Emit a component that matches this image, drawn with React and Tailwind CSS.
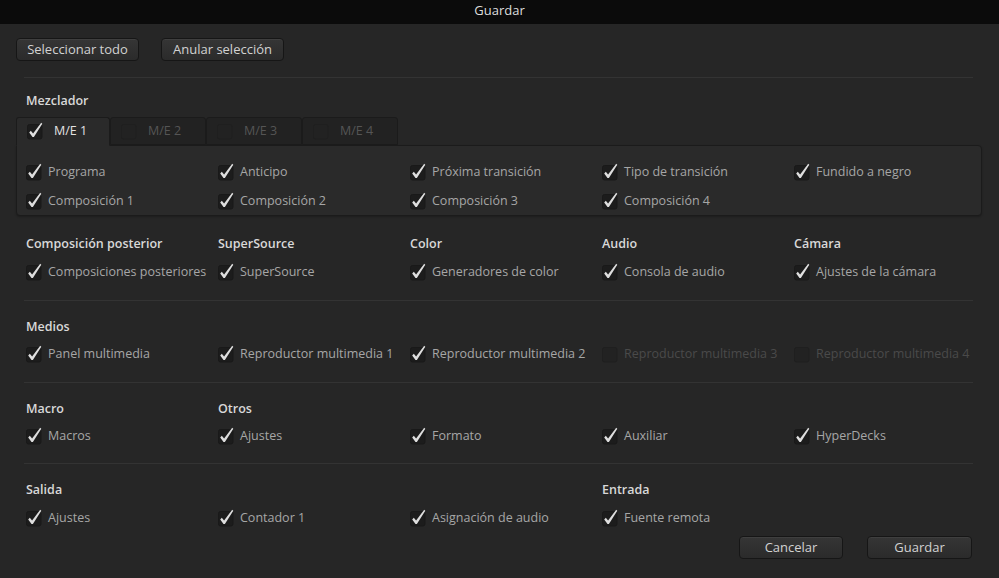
import React from 'react';

const font = { fontFamily: '"Open Sans", "Noto Sans", sans-serif' };

function Check({ on = true, dim = false }) {
  return (
    <svg width="18" height="21" viewBox="0 0 18 21" className="shrink-0">
      <rect x="0.5" y="3.5" width="14.5" height="14.5" rx="2" fill={dim ? '#222222' : '#1c1c1c'} stroke={dim ? '#1f1f1f' : '#191919'} />
      {on && (
        <path d="M2.2 11.4 L3.8 9.8 L6.1 12.4 L14.2 1.8 L15.3 2.7 L6.9 15.9 L5.5 15.9 Z" fill="#dedede" />
      )}
    </svg>
  );
}

function Item({ label, on = true, dim = false }) {
  return (
    <div className="flex items-center h-[20px] gap-[4px]">
      <Check on={on} dim={dim} />
      <span className={`text-[12.5px] whitespace-nowrap ${dim ? 'text-[#4a4a4a]' : 'text-[#a6a6a6]'}`}>{label}</span>
    </div>
  );
}

function Btn({ children, w }) {
  return (
    <button className={`${w} h-[23px] rounded-[4px] border border-[#161616] bg-gradient-to-b from-[#353535] to-[#2b2b2b] text-[13px] text-[#d2d2d2] shadow-[inset_0_1px_0_rgba(255,255,255,0.05)]`}>
      {children}
    </button>
  );
}

function Heads({ items }) {
  return (
    <div className="grid grid-cols-[repeat(5,192px)] h-[18px] pt-[1px] items-center">
      {items.map((h, i) => (
        <div key={i} className="text-[12.5px] font-semibold text-[#d8d8d8] whitespace-nowrap">{h}</div>
      ))}
    </div>
  );
}

function Row({ items, className = '' }) {
  return (
    <div className={`grid grid-cols-[repeat(5,192px)] ${className}`}>
      {items.map((it, i) => (it ? <Item key={i} {...it} /> : <div key={i} />))}
    </div>
  );
}

const Sep = ({ className = '' }) => <div className={`h-px bg-[#333333] ml-[24px] mr-[26px] ${className}`} />;

function Tab({ label, active = false, w }) {
  return (
    <div
      className={`${w} flex items-center pl-[10px] gap-[9px] rounded-t-[3px] border border-[#1b1b1b] ${
        active ? 'bg-[#2a2a2a] border-b-transparent relative z-10 -mb-px h-[29px]' : 'bg-[#222222] h-[28px]'
      }`}
    >
      <Check on={active} dim={!active} />
      <span className={`text-[12.5px] ${active ? 'text-[#e2e2e2]' : 'text-[#555555]'}`}>{label}</span>
    </div>
  );
}

export default function App() {
  return (
    <div className="w-[999px] h-[578px] overflow-hidden bg-[#262626]" style={font}>
      <div className="h-[24px] bg-[#0b0b0b] flex items-center justify-center text-[13px] text-[#dedede] pb-[3px]">Guardar</div>

      <div className="px-[16px] pt-[14px]">
        <div className="flex gap-[22px]">
          <Btn w="w-[123px]">Seleccionar todo</Btn>
          <Btn w="w-[123px]">Anular selección</Btn>
        </div>
      </div>

      <Sep className="mt-[16px]" />

      <div className="pl-[26px] mt-[13px]">
        <Heads items={['Mezclador']} />
      </div>

      <div className="pl-[16px] pr-[17px] mt-[8px]">
        <div className="flex">
          <Tab label="M/E 1" active w="w-[94px]" />
          <Tab label="M/E 2" w="w-[96px]" />
          <Tab label="M/E 3" w="w-[96px]" />
          <Tab label="M/E 4" w="w-[96px]" />
        </div>
        <div className="h-[71px] bg-[#2a2a2a] border border-[#1b1b1b] rounded-b-[4px] rounded-tr-[4px] pl-[9px] pt-[16px] flex flex-col gap-[9px] shadow-[0_1px_2px_rgba(0,0,0,0.25)]">
          <Row
            items={[
              { label: 'Programa' },
              { label: 'Anticipo' },
              { label: 'Próxima transición' },
              { label: 'Tipo de transición' },
              { label: 'Fundido a negro' },
            ]}
          />
          <Row
            items={[
              { label: 'Composición 1' },
              { label: 'Composición 2' },
              { label: 'Composición 3' },
              { label: 'Composición 4' },
            ]}
          />
        </div>
      </div>

      <div className="pl-[26px] mt-[18px]">
        <Heads items={['Composición posterior', 'SuperSource', 'Color', 'Audio', 'Cámara']} />
        <Row
          className="mt-[10px]"
          items={[
            { label: 'Composiciones posteriores' },
            { label: 'SuperSource' },
            { label: 'Generadores de color' },
            { label: 'Consola de audio' },
            { label: 'Ajustes de la cámara' },
          ]}
        />
      </div>

      <Sep className="mt-[18px]" />

      <div className="pl-[26px] mt-[16px]">
        <Heads items={['Medios']} />
        <Row
          className="mt-[9px]"
          items={[
            { label: 'Panel multimedia' },
            { label: 'Reproductor multimedia 1' },
            { label: 'Reproductor multimedia 2' },
            { label: 'Reproductor multimedia 3', on: false, dim: true },
            { label: 'Reproductor multimedia 4', on: false, dim: true },
          ]}
        />
      </div>

      <Sep className="mt-[18px]" />

      <div className="pl-[26px] mt-[16px]">
        <Heads items={['Macro', 'Otros']} />
        <Row
          className="mt-[9px]"
          items={[
            { label: 'Macros' },
            { label: 'Ajustes' },
            { label: 'Formato' },
            { label: 'Auxiliar' },
            { label: 'HyperDecks' },
          ]}
        />
      </div>

      <Sep className="mt-[17px]" />

      <div className="pl-[26px] mt-[16px]">
        <Heads items={['Salida', '', '', 'Entrada']} />
        <Row
          className="mt-[10px]"
          items={[
            { label: 'Ajustes' },
            { label: 'Contador 1' },
            { label: 'Asignación de audio' },
            { label: 'Fuente remota' },
          ]}
        />
      </div>

      <div className="flex justify-end gap-[24px] pr-[27px] mt-[8px]">
        <Btn w="w-[104px]">Cancelar</Btn>
        <Btn w="w-[105px]">Guardar</Btn>
      </div>
    </div>
  );
}
